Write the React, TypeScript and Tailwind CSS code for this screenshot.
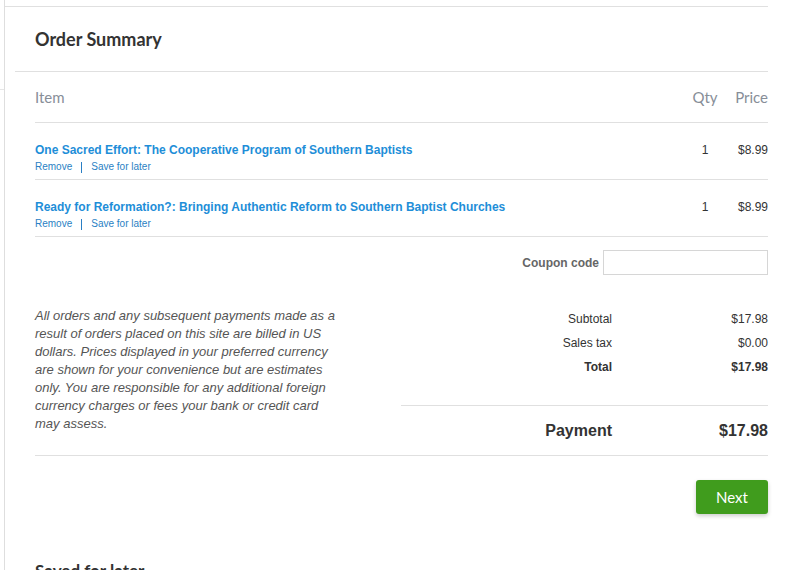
import React from "react";

const arial = { fontFamily: '"Liberation Sans", Arial, sans-serif' };
const lato = { fontFamily: 'Lato, "Open Sans", sans-serif' };

function ItemRow({ title }: { title: string }) {
  return (
    <div className="flex h-[57px] border-b border-[#e0e0e0] pt-[20px]" style={arial}>
      <div className="flex-1">
        <div className="text-[12px] font-bold leading-[14px] text-[#1e8ed8]">{title}</div>
        <div className="mt-[4px] flex items-center text-[10px] leading-[12px] text-[#2a7fc4]">
          <span>Remove</span>
          <span className="mx-[9px] h-[11px] w-px bg-[#2a7fc4]" />
          <span>Save for later</span>
        </div>
      </div>
      <div className="w-[30px] text-center text-[12px] leading-[14px] text-[#333]">1</div>
      <div className="w-[48px] text-right text-[12px] leading-[14px] text-[#333]">$8.99</div>
    </div>
  );
}

function SumRow({ label, value, bold }: { label: string; value: string; bold?: boolean }) {
  return (
    <div className={`flex text-[12px] leading-[24px] text-[#333] ${bold ? "font-bold" : ""}`}>
      <div className="w-[211px] text-right">{label}</div>
      <div className="flex-1 text-right">{value}</div>
    </div>
  );
}

export default function App() {
  return (
    <div className="relative h-[570px] w-[797px] overflow-hidden bg-white">
      <div className="absolute left-0 top-[89px] h-px w-[4px] bg-[#e6e6e6]" />
      <div className="ml-[4px] h-full border-l border-[#dedede] pt-[6px]">
        <div className="w-[763px] border-t border-[#e0e0e0]">
          <div className="flex h-[64px] items-center pl-[30px]">
            <h2 className="text-[18px] font-bold text-[#333]" style={lato}>
              Order Summary
            </h2>
          </div>
          <div className="ml-[10px] border-t border-[#e0e0e0]" />
          <div className="pl-[30px]">
            <div
              className="flex h-[51px] items-center border-b border-[#e0e0e0] text-[15px] text-[#878e98]"
              style={lato}
            >
              <div className="flex-1">Item</div>
              <div className="w-[30px] text-center">Qty</div>
              <div className="w-[48px] text-right">Price</div>
            </div>
            <ItemRow title="One Sacred Effort: The Cooperative Program of Southern Baptists" />
            <ItemRow title="Ready for Reformation?: Bringing Authentic Reform to Southern Baptist Churches" />
            <div className="flex items-center justify-end gap-[4px] pt-[13px]" style={arial}>
              <span className="text-[12px] font-bold text-[#666]">Coupon code</span>
              <input className="h-[25px] w-[165px] border border-[#d6d6d6] bg-white outline-none" />
            </div>
            <div className="flex border-b border-[#e0e0e0] pt-[32px]" style={arial}>
              <p className="w-[306px] text-[13px] italic leading-[18px] text-[#555]">
                All orders and any subsequent payments made as a result of orders placed on this
                site are billed in US dollars. Prices displayed in your preferred currency are shown
                for your convenience but are estimates only. You are responsible for any additional
                foreign currency charges or fees your bank or credit card may assess.
              </p>
              <div className="ml-auto w-[367px]">
                <SumRow label="Subtotal" value="$17.98" />
                <SumRow label="Sales tax" value="$0.00" />
                <SumRow label="Total" value="$17.98" bold />
                <div className="mt-[26px] flex h-[50px] items-center border-t border-[#e0e0e0] text-[16px] font-bold text-[#333]">
                  <div className="w-[211px] text-right">Payment</div>
                  <div className="flex-1 text-right">$17.98</div>
                </div>
              </div>
            </div>
            <div className="mt-[24px] flex justify-end">
              <button
                className="h-[34px] w-[72px] rounded-[3px] bg-[#409c1d] text-[15px] text-white shadow-[0_2px_4px_rgba(0,0,0,0.2)]"
                style={lato}
              >
                Next
              </button>
            </div>
            <h2 className="mt-[45px] text-[17px] font-bold leading-[24px] text-[#333]" style={lato}>
              Saved for later
            </h2>
          </div>
        </div>
      </div>
    </div>
  );
}
